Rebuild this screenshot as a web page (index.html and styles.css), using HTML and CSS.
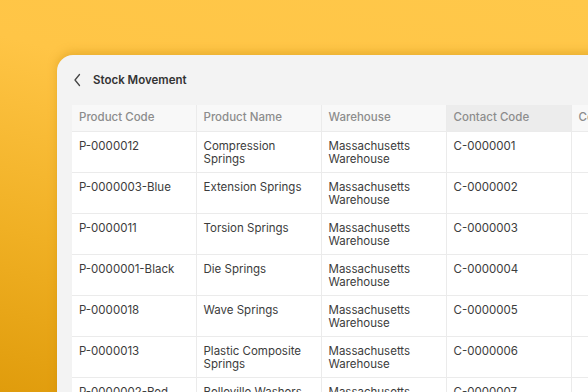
FILE: index.html
```html
<!DOCTYPE html>
<html lang="en">
<head>
  <meta charset="UTF-8">
  <meta name="viewport" content="width=device-width, initial-scale=1.0">
  <title>Stock Movement</title>
  <link rel="stylesheet" href="styles.css">
</head>
<body>
  <div class="panel">
    <div class="title">
      <svg class="back" width="10" height="14" viewBox="0 0 10 14"><path d="M6.5 1.5L2 7l4.5 5.5" fill="none" stroke="#444" stroke-width="1.3" stroke-linecap="round" stroke-linejoin="round"/></svg>
      <h1>Stock Movement</h1>
    </div>
    <table class="grid">
      <colgroup>
        <col class="c1"><col class="c2"><col class="c3"><col class="c4"><col class="c5">
      </colgroup>
      <thead>
        <tr>
          <th>Product Code</th>
          <th>Product Name</th>
          <th>Warehouse</th>
          <th class="sorted">Contact Code</th>
          <th>Contact</th>
        </tr>
      </thead>
      <tbody>
        <tr><td>P-0000012</td><td>Compression Springs</td><td>Massachusetts Warehouse</td><td>C-0000001</td><td></td></tr>
        <tr><td>P-0000003-Blue</td><td>Extension Springs</td><td>Massachusetts Warehouse</td><td>C-0000002</td><td></td></tr>
        <tr><td>P-0000011</td><td>Torsion Springs</td><td>Massachusetts Warehouse</td><td>C-0000003</td><td></td></tr>
        <tr><td>P-0000001-Black</td><td>Die Springs</td><td>Massachusetts Warehouse</td><td>C-0000004</td><td></td></tr>
        <tr><td>P-0000018</td><td>Wave Springs</td><td>Massachusetts Warehouse</td><td>C-0000005</td><td></td></tr>
        <tr><td>P-0000013</td><td>Plastic Composite Springs</td><td>Massachusetts Warehouse</td><td>C-0000006</td><td></td></tr>
        <tr><td>P-0000002-Red</td><td>Belleville Washers</td><td>Massachusetts Warehouse</td><td>C-0000007</td><td></td></tr>
      </tbody>
    </table>
  </div>
</body>
</html>
```

FILE: styles.css
```css
*{
  margin: 0; padding: 0;
  box-sizing: border-box;
}

body{
  width: 588px; height: 392px;
  overflow: hidden;
  padding: 55px 0 0 57px;
  font-family: Inter, "Noto Sans", sans-serif;
  background: linear-gradient(195deg, #ffc84a 0%, #ffc546 35%, #f0b024 70%, #e09c0c 100%);
}

/* 흰 패널 */
.panel{
  width: 600px; height: 400px;
  background: #f3f3f3;
  border-radius: 16px 0 0 0;
  padding: 0 0 0 15px;
  box-shadow: 0 -3px 10px rgba(190, 130, 0, 0.35);
}

.title{
  display: flex; align-items: center;
  height: 50px;
  gap: 10px;
  padding-left: 1px;
}
.title h1{
  font-size: 11.5px; font-weight: 600;
  color: #333;
}

/* 표 */
.grid{
  border-collapse: collapse;
  table-layout: fixed;
  width: 640px;
  background: #fff;
  font-size: 11.5px;
  color: #3c3c3c;
}
.c1{ width: 124px; }
.c2, .c3, .c4{ width: 125px; }
.c5{ width: 141px; }

.grid th, .grid td{
  border: 1px solid #ebebeb;
  text-align: left;
  vertical-align: top;
  padding: 0 7px;
  line-height: 13.5px;
}
.grid th{
  height: 26px;
  vertical-align: middle;
  background: #f8f8f8;
  font-weight: 500;
  color: #8c8c8c;
}
.grid th.sorted{
  background: #ececec;
}
.grid td{
  height: 41px;
  padding-top: 8px;
}
.grid td:first-child, .grid th:first-child{ border-left: 0; }
.grid thead th{ border-top: 0; }
```
